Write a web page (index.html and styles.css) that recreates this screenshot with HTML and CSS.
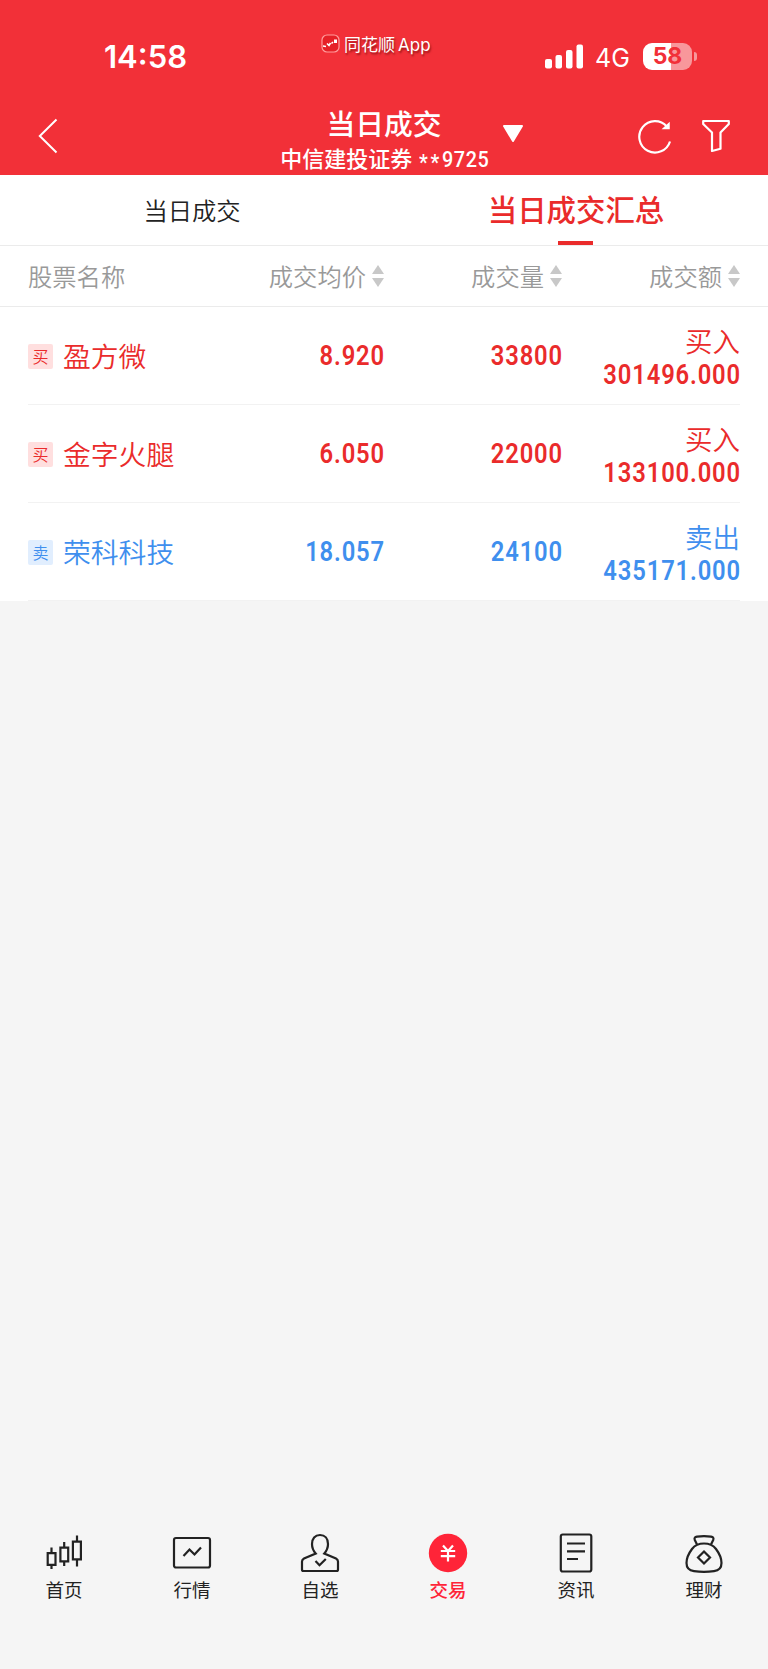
FILE: index.html
```html
<!DOCTYPE html>
<html lang="zh-CN">
<head>
    <meta charset="UTF-8">
    <title>当日成交汇总</title>
    <link rel="stylesheet" href="styles.css">
</head>
<body>
    <header class="header">
        <!-- 状态栏 -->
        <div class="status">
            <div class="time">14:58</div>
            <div class="brand">
                <svg width="19" height="19" viewBox="0 0 19 19">
                    <rect x="1" y="1" width="17" height="17" rx="5" fill="#e62027" stroke="#ff9c9c" stroke-width="1.2"/>
                    <path d="M2 12 L5 12.5 M6 9.5 L8 11.5 L9.500 9 M10.500 9.500 L12 8" fill="none" stroke="#fff" stroke-width="1.6"/>
                    <rect x="13" y="5.500" width="3" height="3.500" fill="#fff"/>
                </svg>
                <span>同花顺<i>App</i></span>
            </div>
            <div class="signal">
                <svg width="39" height="25" viewBox="0 0 39 25" fill="#fff">
                    <rect x="0" y="15" width="7" height="9.500" rx="2"/>
                    <rect x="10.500" y="11" width="6.500" height="13.500" rx="2"/>
                    <rect x="21" y="6" width="6.500" height="18.500" rx="2"/>
                    <rect x="31.500" y="0.500" width="6.500" height="24" rx="2"/>
                </svg>
                <span class="net">4G</span>
                <div class="battery">58</div>
            </div>
        </div>
        <!-- 标题栏 -->
        <div class="navbar">
            <svg class="back" width="20" height="36" viewBox="0 0 20 36">
                <path d="M18.500 1.500 L1.800 18 L18.500 34.500" fill="none" stroke="#fff" stroke-width="2"/>
            </svg>
            <div class="title">
                <h1>当日成交</h1>
                <p>中信建投证券 <span><b>**</b>9725</span></p>
            </div>
            <svg class="arrow" width="22" height="18" viewBox="0 0 22 18">
                <path d="M2 1 H20 L11 16 Z" fill="#fff" stroke="#fff" stroke-width="2" stroke-linejoin="round"/>
            </svg>
            <div class="tools">
                <svg width="34" height="36" viewBox="0 0 34 36" fill="none" stroke="#fff" stroke-width="2.200">
                    <path d="M32 22.500 A15.700 15.700 0 1 1 28.800 7.500"/>
                    <path d="M25.500 9.500 H31 V4.500 Z" fill="#fff" stroke-width="1.500"/>
                </svg>
                <svg width="28" height="34" viewBox="0 0 28 34" fill="none" stroke="#fff" stroke-width="2.200" stroke-linejoin="round">
                    <path d="M1.200 2 H26.800 V5 L18.500 13.500 V29.800 L10 32 V13.500 L1.200 5 Z"/>
                </svg>
            </div>
        </div>
    </header>

    <div class="tabs">
        <div class="tab">当日成交</div>
        <div class="tab active">当日成交汇总</div>
    </div>

    <main class="list">
        <div class="row head">
            <span>股票名称</span>
            <span>成交均价<i class="sort"></i></span>
            <span>成交量<i class="sort"></i></span>
            <span>成交额<i class="sort"></i></span>
        </div>
        <div class="row buy">
            <div class="name"><em>买</em>盈方微</div>
            <div class="num">8.920</div>
            <div class="num">33800</div>
            <div class="amount"><span>买入</span><div class="num">301496.000</div></div>
        </div>
        <div class="row buy">
            <div class="name"><em>买</em>金字火腿</div>
            <div class="num">6.050</div>
            <div class="num">22000</div>
            <div class="amount"><span>买入</span><div class="num">133100.000</div></div>
        </div>
        <div class="row sell">
            <div class="name"><em>卖</em>荣科科技</div>
            <div class="num">18.057</div>
            <div class="num">24100</div>
            <div class="amount"><span>卖出</span><div class="num">435171.000</div></div>
        </div>
    </main>

    <!-- 底部导航 -->
    <nav class="tabbar">
        <div class="item">
            <svg viewBox="0 0 40 40">
                <path d="M7.500 14.500 V20 M7.500 32 V36 M20.200 9 V14.500 M20.200 28.500 V33 M33 2.500 V8.500 M33 26.500 V33.500"/>
                <path d="M3.700 20.200 H11.500 V31.800 H3.700 Z M16.400 14.700 H24.200 V28.300 H16.400 Z M28.900 8.700 H36.900 V26.300 H28.900 Z"/>
            </svg>
            <span>首页</span>
        </div>
        <div class="item">
            <svg viewBox="0 0 40 40">
                <rect x="2" y="5" width="36" height="29.500" rx="2"/>
                <path d="M11.500 23 L17.500 16.500 L22.500 21.500 L29 14.500"/>
            </svg>
            <span>行情</span>
        </div>
        <div class="item">
            <svg viewBox="0 0 40 40">
                <path d="M15.700 20.500 C13 17.500 12 14.500 12 11 C12 5.500 15 2 20 2 C25 2 28 5.500 28 11 C28 14.500 27 17.500 24.300 20.500 L36 25.500 C37.500 26.300 38 27 38 28.500 V36.500 Q38 38 36.500 38 H3.500 Q2 38 2 36.500 V28.500 C2 27 2.500 26.300 4 25.500 Z"/>
                <path d="M15.500 28 L19.500 32.200 L25.800 26"/>
            </svg>
            <span>自选</span>
        </div>
        <div class="item current">
            <svg viewBox="0 0 40 40">
                <circle cx="20" cy="20" r="19.200"/>
                <path d="M15 12.500 L20 18 L25 12.500 M12.800 18 H27.200 M12.800 23.200 H27.200 M20 18 V28.500"/>
            </svg>
            <span>交易</span>
        </div>
        <div class="item">
            <svg viewBox="0 0 40 40">
                <rect x="4.800" y="1.500" width="30.500" height="37" rx="2"/>
                <path d="M11 10.500 H29 M11 18.300 H29 M11 26 H22"/>
            </svg>
            <span>资讯</span>
        </div>
        <div class="item">
            <svg viewBox="0 0 40 40">
                <path d="M13 11.500 L10.800 7 C10 5 11 4 13 3.600 Q20 2.600 27 3.600 C29 4 30 5 29.200 7 L27 11.500"/>
                <path d="M20 10.500 C25 10.500 29 12 32 16 C35 20 37.500 25 37.500 30 C37.500 35 35.500 37.500 30 38.200 Q20 39.500 10 38.200 C4.500 37.500 2.500 35 2.500 30 C2.500 25 5 20 8 16 C11 12 15 10.500 20 10.500 Z"/>
                <path d="M20 18.500 L26 24.500 L20 30.500 L14 24.500 Z"/>
            </svg>
            <span>理财</span>
        </div>
    </nav>
</body>
</html>
```

FILE: styles.css
```css
* {
    box-sizing: border-box;
}
body {
    margin: 0;
    min-height: 1669px;
    display: flex;
    flex-direction: column;
    background-color: #f5f5f5;
    color: #222;
    font-family: "Noto Sans CJK SC", sans-serif;
}
i, em {
    font-style: normal;
}
svg {
    display: block;
}

/* 顶部 */
.header {
    height: 175px;
    background-color: #f23038;
    color: #fff;
}
.status {
    display: grid;
    grid-template-columns: 321px 224px 1fr;
    height: 100px;
}
.time {
    padding: 39px 0 0 104px;
    font: 600 31px/36px Inter, sans-serif;
}
.brand {
    display: flex;
    align-items: flex-start;
    gap: 4px;
    padding-top: 34px;
    font-size: 17px;
    line-height: 20px;
    text-shadow: 1px 2px 2px rgba(90, 0, 0, 0.6);
}
.brand i {
    margin-left: 3px;
    font-family: Inter, sans-serif;
}
.signal {
    display: flex;
    align-items: flex-start;
    padding-top: 44px;
}
.net {
    margin: -1px 0 0 11px;
    width: 48px;
    font: 25px/30px Inter, sans-serif;
}
.battery {
    position: relative;
    width: 49px;
    height: 27px;
    margin-top: -1px;
    border-radius: 9px;
    background: linear-gradient(90deg, #fff 58%, #f8979b 58%);
    color: #f23038;
    font: 700 23px/27px Inter, sans-serif;
    text-align: center;
}
.battery::after {
    content: "";
    position: absolute;
    right: -5px;
    top: 9px;
    width: 3px;
    height: 9px;
    border-radius: 0 3px 3px 0;
    background-color: #f8979b;
}
.navbar {
    display: grid;
    grid-template-columns: 260px 248px 130px 1fr;
    height: 75px;
}
.back {
    margin: 18px 0 0 38px;
}
.title {
    text-align: center;
    white-space: nowrap;
}
.title h1 {
    margin: 6px 0 0;
    font-size: 28.800px;
    font-weight: 500;
    line-height: 34px;
}
.title p {
    margin: 2px 0 0;
    font-size: 22px;
    font-weight: 500;
    line-height: 30px;
}
.title p span {
    display: inline-block;
    margin: 0 -10px 0 2px;
    font-family: Roboto, sans-serif;
    letter-spacing: 0.700px;
    transform: scaleX(0.9);
    transform-origin: left;
}
.title b {
    font-weight: 500;
    letter-spacing: 3px;
    vertical-align: -3px;
    line-height: 1;
}
.arrow {
    margin: 25px 0 0 -6px;
}
.tools {
    display: flex;
    gap: 30px;
    padding-top: 19px;
}

/* 标签 */
.tabs {
    display: flex;
    height: 71px;
    background-color: #fff;
    border-bottom: 1px solid #ebebeb;
}
.tab {
    position: relative;
    flex: 1;
    text-align: center;
    font-size: 24.300px;
    font-weight: 350;
    line-height: 70px;
}
.tab.active {
    color: #ea2b2b;
    font-size: 29.400px;
    font-weight: 500;
    line-height: 67px;
}
.tab.active::after {
    content: "";
    position: absolute;
    left: 174px;
    bottom: 0;
    width: 35px;
    height: 4px;
    background-color: #ea2b2b;
}

/* 成交列表 */
.list {
    background-color: #fff;
}
.row {
    display: grid;
    grid-template-columns: repeat(4, 178px);
    align-items: center;
    height: 98px;
    margin: 0 28px;
    border-bottom: 1px solid #f2f2f2;
    text-align: right;
}
.row.head {
    height: 61px;
    margin: 0;
    padding: 0 28px 2px;
    border-bottom-color: #ebebeb;
    color: #999;
    font-size: 24.300px;
    font-weight: 350;
}
.head span {
    display: flex;
    align-items: center;
    justify-content: flex-end;
    gap: 6px;
}
.head span:first-child {
    justify-content: flex-start;
}
.sort {
    padding-top: 2px;
}
.sort::before,
.sort::after {
    content: "";
    display: block;
    border: 6px solid transparent;
}
.sort::before {
    border-top: 0;
    border-bottom: 9px solid #c8c8c8;
    margin-bottom: 4px;
}
.sort::after {
    border-bottom: 0;
    border-top: 9px solid #c8c8c8;
}
.buy {
    color: #ea2b2b;
}
.sell {
    color: #3f8fee;
}
.name {
    display: flex;
    align-items: center;
    gap: 10px;
    font-size: 27.800px;
    font-weight: 350;
    line-height: 40px;
    padding-bottom: 1px;
}
.name em {
    width: 25px;
    height: 25px;
    margin-top: 2px;
    border-radius: 2px;
    background-color: #ffdfdf;
    font-size: 16px;
    line-height: 24px;
    text-align: center;
}
.sell .name em {
    background-color: #e1eefe;
}
.num {
    margin-right: -1px;
    font: 600 28px/34px Roboto, sans-serif;
    letter-spacing: 1px;
    transform: scaleX(0.85);
    transform-origin: right;
}
.amount {
    padding-top: 6px;
}
.amount span {
    display: block;
    font-size: 27.500px;
    font-weight: 350;
    line-height: 33px;
}
.amount .num {
    line-height: 36px;
}

/* 底部导航 */
.tabbar {
    display: flex;
    height: 146px;
    margin-top: auto;
    padding-top: 10px;
}
.item {
    flex: 1;
    display: flex;
    flex-direction: column;
    align-items: center;
    font-size: 18.500px;
    line-height: 32px;
}
.item svg {
    width: 40px;
    height: 40px;
    fill: none;
    stroke: #222;
    stroke-width: 2.200;
}
.current {
    color: #ff2438;
    font-weight: 500;
}
.current svg {
    stroke: #fff;
}
.current circle {
    fill: #ff2438;
    stroke: none;
}
```
